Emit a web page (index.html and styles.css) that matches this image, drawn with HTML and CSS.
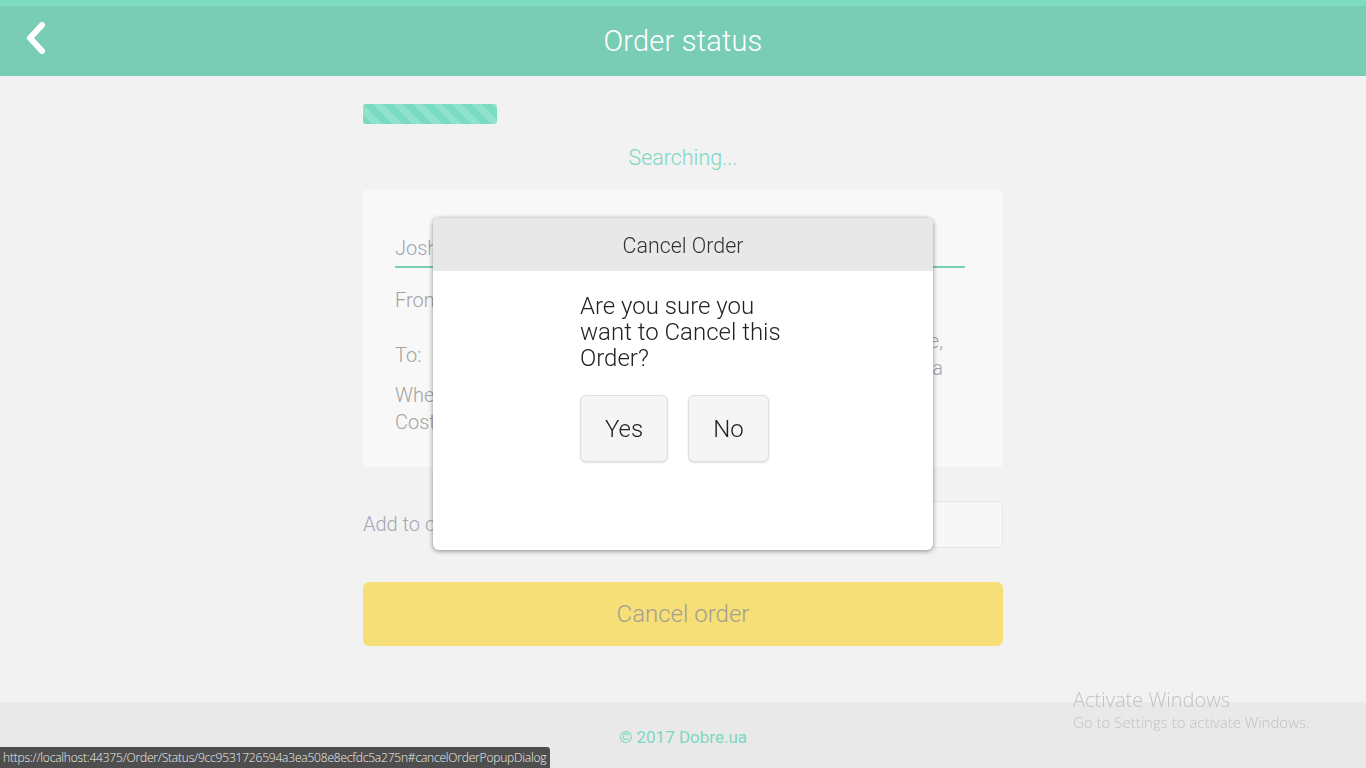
FILE: index.html
```html
<!DOCTYPE html>
<html lang="en">
<head>
<meta charset="utf-8">
<title>Order status</title>
<link rel="stylesheet" href="styles.css">
</head>
<body>
<div class="page">
  <header class="topbar">
    <a class="back" href="#">
      <svg width="22" height="32" viewBox="0 0 22 32"><path d="M17 3 L5 16 L17 29" fill="none" stroke="#fff" stroke-width="6" stroke-linecap="round" stroke-linejoin="round"/></svg>
    </a>
    <h1 class="title">Order status</h1>
  </header>

  <main class="main">
    <div class="progress"></div>
    <p class="searching">Searching...</p>

    <section class="card">
      <div class="name-field">Joshua Smith</div>
      <div class="row row-from"><span class="label">From:</span><span class="value">Khreshchatyk St, 22</span></div>
      <div class="row row-to"><span class="label">To:</span><span class="value">Velyka Vasylkivska St, 72, Kyiv, Ukraine,<br>Kyivska oblast, Ukraina</span></div>
      <div class="row-stack">
        <div class="label">When: today, 14:30</div>
        <div class="label">Cost: 120 UAH</div>
      </div>
    </section>

    <div class="comment-row">
      <span class="comment-label">Add to comment:</span>
      <div class="comment-input"></div>
    </div>

    <button class="cancel-btn">Cancel order</button>
  </main>

  <footer class="footer">© 2017 Dobre.ua</footer>
</div>

<div class="modal">
  <div class="modal-head">Cancel Order</div>
  <div class="modal-body">
    <p class="question">Are you sure you want to Cancel this Order?</p>
    <div class="actions">
      <button class="mbtn yes">Yes</button>
      <button class="mbtn no">No</button>
    </div>
  </div>
</div>

<div class="watermark">
  <div class="wm-title">Activate Windows</div>
  <div class="wm-sub">Go to Settings to activate Windows.</div>
</div>

<div class="statusbar">https://localhost:44375/Order/Status/9cc9531726594a3ea508e8ecfdc5a275n#cancelOrderPopupDialog</div>
</body>
</html>
```

FILE: styles.css
```css
* { box-sizing: border-box; }
html, body { margin: 0; padding: 0; }
body {
  background: #f2f2f2;
  font-family: Roboto, "Liberation Sans", sans-serif;
  font-weight: 300;
  height: 768px;
  overflow: hidden;
}
.page {
  display: flex;
  flex-direction: column;
  height: 768px;
}
.topbar {
  height: 76px;
  background: #79cdb4;
  border-top: 6px solid #7bdcbf;
  display: flex;
  align-items: center;
  justify-content: center;
  position: relative;
  flex-shrink: 0;
}
.back {
  position: absolute;
  left: 25px;
  top: 16px;
  display: block;
  line-height: 0;
}
.title {
  margin: 0;
  color: #fff;
  font-weight: 300;
  font-size: 29px;
  letter-spacing: 0.2px;
}
.main {
  width: 640px;
  margin: 0 auto;
  flex: 1;
  padding-top: 28px;
}
.progress {
  width: 134px;
  height: 20px;
  border-radius: 3px;
  background-color: #79dcc0;
  background-image: repeating-linear-gradient(45deg, #79dcc0 0 7px, #8fe2cb 7px 14px);
}
.searching {
  margin: 22px 0 0;
  text-align: center;
  color: #7dd6c0;
  font-size: 21.4px;
  line-height: 24px;
}
.card {
  margin-top: 20px;
  background: #f8f8f8;
  border-radius: 4px;
  height: 277px;
  padding: 46px 38px 0 32px;
}
.name-field {
  color: #9ea3b3;
  font-size: 20px;
  line-height: 24px;
  padding-bottom: 6px;
  border-bottom: 2px solid #79cdb4;
}
.row {
  display: flex;
  justify-content: space-between;
  align-items: center;
  color: #a7a19d;
  font-size: 20px;
  line-height: 27px;
}
.row-from { margin-top: 19px; }
.row-from .value { visibility: hidden; }
.row-to { margin-top: 14px; }
.row .value { text-align: right; color: #a4a0b0; margin-right: 22px; }
.row-stack {
  margin-top: 0;
  color: #a7a19d;
  font-size: 20px;
  line-height: 27px;
}
.comment-row {
  margin-top: 34px;
  display: flex;
  align-items: center;
  height: 47px;
}
.comment-label {
  color: #a3a5b2;
  font-size: 20px;
  width: 200px;
  margin-top: -1px;
}
.comment-input {
  flex: 1;
  height: 47px;
  background: #f7f7f7;
  border: 1px solid #e6e6e6;
  border-radius: 6px;
}
.cancel-btn {
  display: block;
  width: 100%;
  margin-top: 34px;
  height: 64px;
  border: none;
  border-radius: 6px;
  background: #f7df78;
  color: #a29e96;
  font-family: Roboto, "Liberation Sans", sans-serif;
  font-weight: 300;
  font-size: 24px;
}
.footer {
  height: 66px;
  flex-shrink: 0;
  background: #e9e9e9;
  color: #7dd8c0;
  font-size: 17px;
  font-weight: 400;
  text-align: center;
  padding-top: 25px;
}
.modal {
  position: fixed;
  left: 433px;
  top: 218px;
  width: 500px;
  height: 332px;
  background: #fff;
  border-radius: 6px;
  box-shadow: 0 1px 5px rgba(0,0,0,0.45);
  overflow: hidden;
}
.modal-head {
  height: 53px;
  background: #e8e8e8;
  color: #333;
  font-size: 21.4px;
  text-align: center;
  line-height: 56px;
}
.modal-body {
  width: 206px;
  margin: 0 auto;
  padding-top: 22px;
}
.question {
  margin: 0;
  font-size: 24px;
  line-height: 26px;
  color: #222;
}
.actions {
  display: flex;
  gap: 20px;
  margin-top: 24px;
}
.mbtn {
  height: 67px;
  background: #f5f5f5;
  border: 1px solid #dedede;
  border-radius: 6px;
  box-shadow: 0 1px 2px rgba(0,0,0,0.12);
  font-family: Roboto, "Liberation Sans", sans-serif;
  font-weight: 300;
  font-size: 24px;
  color: #222;
  padding: 0;
}
.yes { width: 88px; }
.no { width: 81px; }
.watermark {
  position: fixed;
  left: 1073px;
  top: 687px;
  color: #c2c2c2;
  font-family: "Open Sans", "Liberation Sans", sans-serif;
}
.wm-title { font-size: 20px; line-height: 25px; }
.wm-sub { font-size: 15px; line-height: 20px; }
.statusbar {
  position: fixed;
  left: 0;
  bottom: 0;
  width: 550px;
  height: 21px;
  background: #4e4e4e;
  color: #eee;
  font-family: "Open Sans", "Liberation Sans", sans-serif;
  font-size: 12px;
  line-height: 21px;
  padding-left: 3px;
  border-top-right-radius: 3px;
  white-space: nowrap;
  overflow: hidden;
  letter-spacing: -0.2px;
}
```
